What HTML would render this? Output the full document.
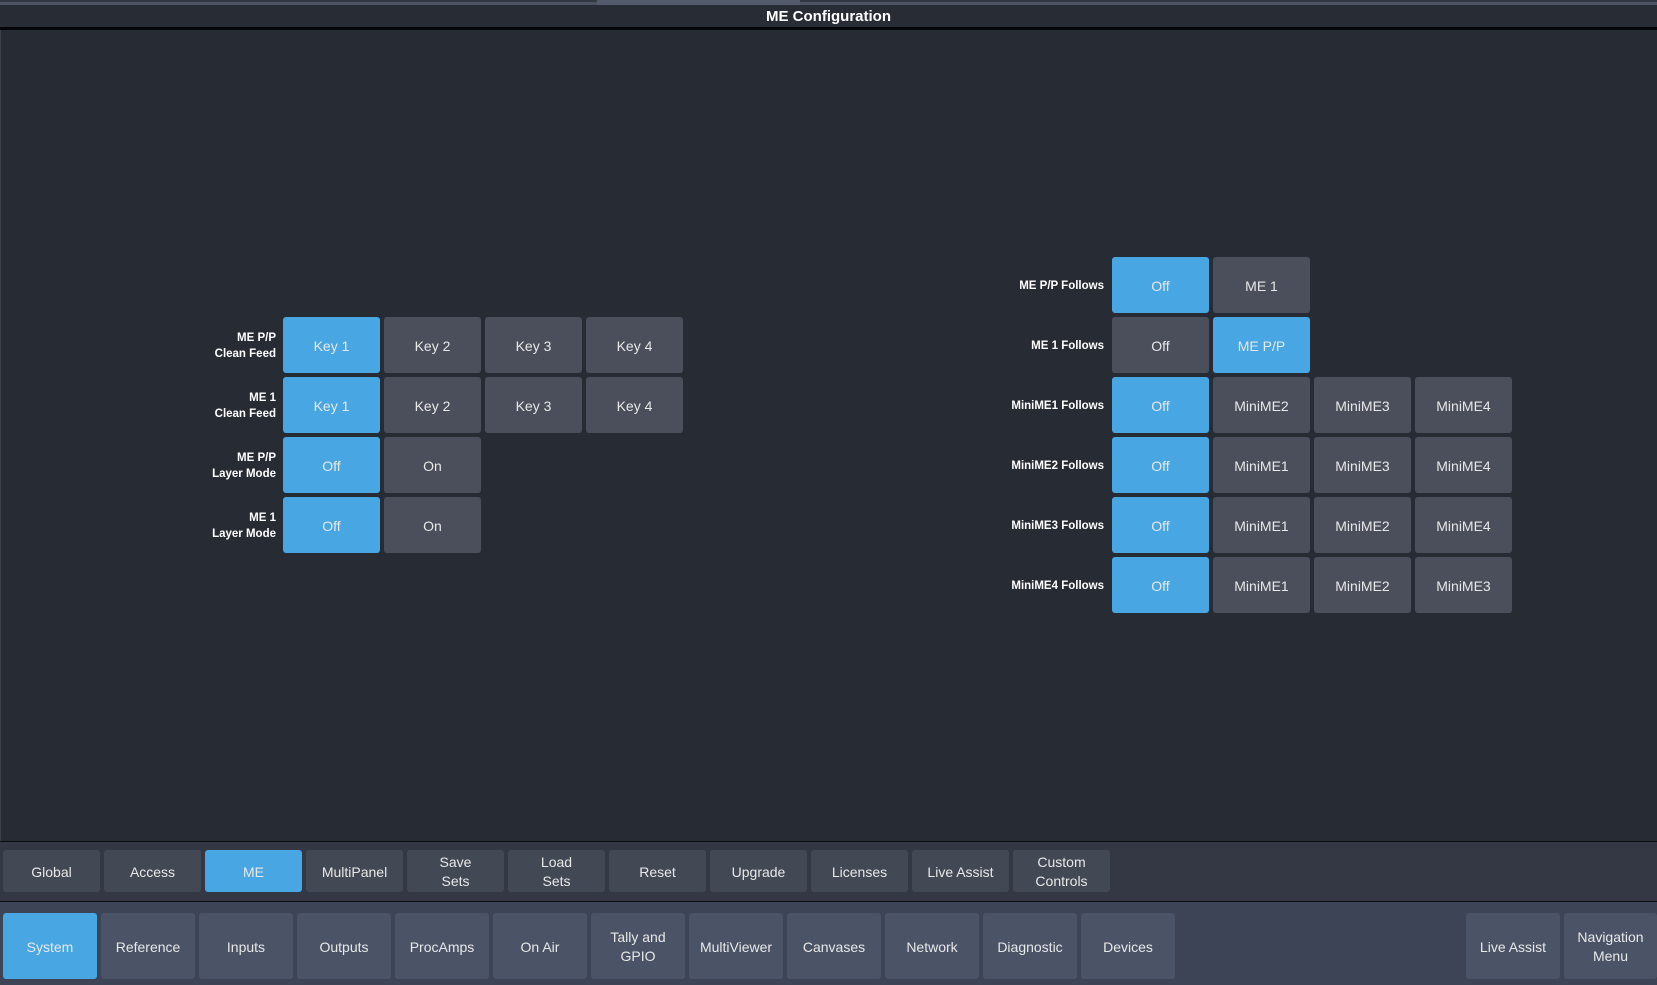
<!DOCTYPE html>
<html><head><meta charset="utf-8"><style>
*{margin:0;padding:0;box-sizing:border-box}
body{width:1657px;height:985px;background:#272b33;position:relative;overflow:hidden;font-family:"Liberation Sans",sans-serif;color:#e8e8e8}
.a{position:absolute}
.b{position:absolute;border-radius:3px;background:#4a4f5b;display:flex;align-items:center;justify-content:center;text-align:center;font-size:14px;line-height:19px;color:#e8e8e8;padding-top:2px}
.on{background:#48a6e2}
.l{position:absolute;font-weight:bold;font-size:11.5px;line-height:16px;text-align:right;color:#fff;display:flex;align-items:center;justify-content:flex-end;padding-top:2px}
.t1{background:#434855}
.t2{background:#4b5366}
</style></head><body>
<div class="a" style="left:0;top:0;width:1657px;height:2px;background:#33373f"></div>
<div class="a" style="left:0;top:2px;width:1657px;height:3px;background:#4c5261"></div>
<div class="a" style="left:597px;top:0;width:203px;height:5px;background:#525a6c"></div>
<div class="a" style="left:0;top:5px;width:1657px;height:22px;background:#282c34;text-align:center;font-weight:bold;font-size:15px;line-height:24px;color:#fff">ME Configuration</div>
<div class="a" style="left:0;top:27px;width:1657px;height:3px;background:#050608"></div>
<div class="a" style="left:0;top:30px;width:1px;height:811px;background:#3a3f4a"></div>

<!-- left grid -->
<div class="l" style="left:180px;top:317px;width:96px;height:56px">ME P/P<br>Clean Feed</div>
<div class="l" style="left:180px;top:377px;width:96px;height:56px">ME 1<br>Clean Feed</div>
<div class="l" style="left:180px;top:437px;width:96px;height:56px">ME P/P<br>Layer Mode</div>
<div class="l" style="left:180px;top:497px;width:96px;height:56px">ME 1<br>Layer Mode</div>
<div class="b on" style="left:283px;top:317px;width:97px;height:56px">Key 1</div>
<div class="b" style="left:384px;top:317px;width:97px;height:56px">Key 2</div>
<div class="b" style="left:485px;top:317px;width:97px;height:56px">Key 3</div>
<div class="b" style="left:586px;top:317px;width:97px;height:56px">Key 4</div>
<div class="b on" style="left:283px;top:377px;width:97px;height:56px">Key 1</div>
<div class="b" style="left:384px;top:377px;width:97px;height:56px">Key 2</div>
<div class="b" style="left:485px;top:377px;width:97px;height:56px">Key 3</div>
<div class="b" style="left:586px;top:377px;width:97px;height:56px">Key 4</div>
<div class="b on" style="left:283px;top:437px;width:97px;height:56px">Off</div>
<div class="b" style="left:384px;top:437px;width:97px;height:56px">On</div>
<div class="b on" style="left:283px;top:497px;width:97px;height:56px">Off</div>
<div class="b" style="left:384px;top:497px;width:97px;height:56px">On</div>

<!-- right grid -->
<div class="l" style="left:960px;top:257px;width:144px;height:56px">ME P/P Follows</div>
<div class="l" style="left:960px;top:317px;width:144px;height:56px">ME 1 Follows</div>
<div class="l" style="left:960px;top:377px;width:144px;height:56px">MiniME1 Follows</div>
<div class="l" style="left:960px;top:437px;width:144px;height:56px">MiniME2 Follows</div>
<div class="l" style="left:960px;top:497px;width:144px;height:56px">MiniME3 Follows</div>
<div class="l" style="left:960px;top:557px;width:144px;height:56px">MiniME4 Follows</div>
<div class="b on" style="left:1112px;top:257px;width:97px;height:56px">Off</div>
<div class="b" style="left:1213px;top:257px;width:97px;height:56px">ME 1</div>
<div class="b" style="left:1112px;top:317px;width:97px;height:56px">Off</div>
<div class="b on" style="left:1213px;top:317px;width:97px;height:56px">ME P/P</div>
<div class="b on" style="left:1112px;top:377px;width:97px;height:56px">Off</div>
<div class="b" style="left:1213px;top:377px;width:97px;height:56px">MiniME2</div>
<div class="b" style="left:1314px;top:377px;width:97px;height:56px">MiniME3</div>
<div class="b" style="left:1415px;top:377px;width:97px;height:56px">MiniME4</div>
<div class="b on" style="left:1112px;top:437px;width:97px;height:56px">Off</div>
<div class="b" style="left:1213px;top:437px;width:97px;height:56px">MiniME1</div>
<div class="b" style="left:1314px;top:437px;width:97px;height:56px">MiniME3</div>
<div class="b" style="left:1415px;top:437px;width:97px;height:56px">MiniME4</div>
<div class="b on" style="left:1112px;top:497px;width:97px;height:56px">Off</div>
<div class="b" style="left:1213px;top:497px;width:97px;height:56px">MiniME1</div>
<div class="b" style="left:1314px;top:497px;width:97px;height:56px">MiniME2</div>
<div class="b" style="left:1415px;top:497px;width:97px;height:56px">MiniME4</div>
<div class="b on" style="left:1112px;top:557px;width:97px;height:56px">Off</div>
<div class="b" style="left:1213px;top:557px;width:97px;height:56px">MiniME1</div>
<div class="b" style="left:1314px;top:557px;width:97px;height:56px">MiniME2</div>
<div class="b" style="left:1415px;top:557px;width:97px;height:56px">MiniME3</div>

<!-- toolbars -->
<div class="a" style="left:0;top:841px;width:1657px;height:1px;background:#0b0c0f"></div>
<div class="a" style="left:0;top:842px;width:1657px;height:59px;background:#333844"></div>
<div class="a" style="left:0;top:901px;width:1657px;height:1px;background:#0b0c0f"></div>
<div class="a" style="left:0;top:902px;width:1657px;height:83px;background:#3c4455"></div>

<div class="b t1" style="left:3px;top:850px;width:97px;height:42px">Global</div>
<div class="b t1" style="left:104px;top:850px;width:97px;height:42px">Access</div>
<div class="b on" style="left:205px;top:850px;width:97px;height:42px">ME</div>
<div class="b t1" style="left:306px;top:850px;width:97px;height:42px">MultiPanel</div>
<div class="b t1" style="left:407px;top:850px;width:97px;height:42px">Save<br>Sets</div>
<div class="b t1" style="left:508px;top:850px;width:97px;height:42px">Load<br>Sets</div>
<div class="b t1" style="left:609px;top:850px;width:97px;height:42px">Reset</div>
<div class="b t1" style="left:710px;top:850px;width:97px;height:42px">Upgrade</div>
<div class="b t1" style="left:811px;top:850px;width:97px;height:42px">Licenses</div>
<div class="b t1" style="left:912px;top:850px;width:97px;height:42px">Live Assist</div>
<div class="b t1" style="left:1013px;top:850px;width:97px;height:42px">Custom<br>Controls</div>

<div class="b on" style="left:3px;top:913px;width:94px;height:66px">System</div>
<div class="b t2" style="left:101px;top:913px;width:94px;height:66px">Reference</div>
<div class="b t2" style="left:199px;top:913px;width:94px;height:66px">Inputs</div>
<div class="b t2" style="left:297px;top:913px;width:94px;height:66px">Outputs</div>
<div class="b t2" style="left:395px;top:913px;width:94px;height:66px">ProcAmps</div>
<div class="b t2" style="left:493px;top:913px;width:94px;height:66px">On Air</div>
<div class="b t2" style="left:591px;top:913px;width:94px;height:66px">Tally and<br>GPIO</div>
<div class="b t2" style="left:689px;top:913px;width:94px;height:66px">MultiViewer</div>
<div class="b t2" style="left:787px;top:913px;width:94px;height:66px">Canvases</div>
<div class="b t2" style="left:885px;top:913px;width:94px;height:66px">Network</div>
<div class="b t2" style="left:983px;top:913px;width:94px;height:66px">Diagnostic</div>
<div class="b t2" style="left:1081px;top:913px;width:94px;height:66px">Devices</div>
<div class="b t2" style="left:1466px;top:913px;width:94px;height:66px">Live Assist</div>
<div class="b t2" style="left:1564px;top:913px;width:93px;height:66px">Navigation<br>Menu</div>
</body></html>
